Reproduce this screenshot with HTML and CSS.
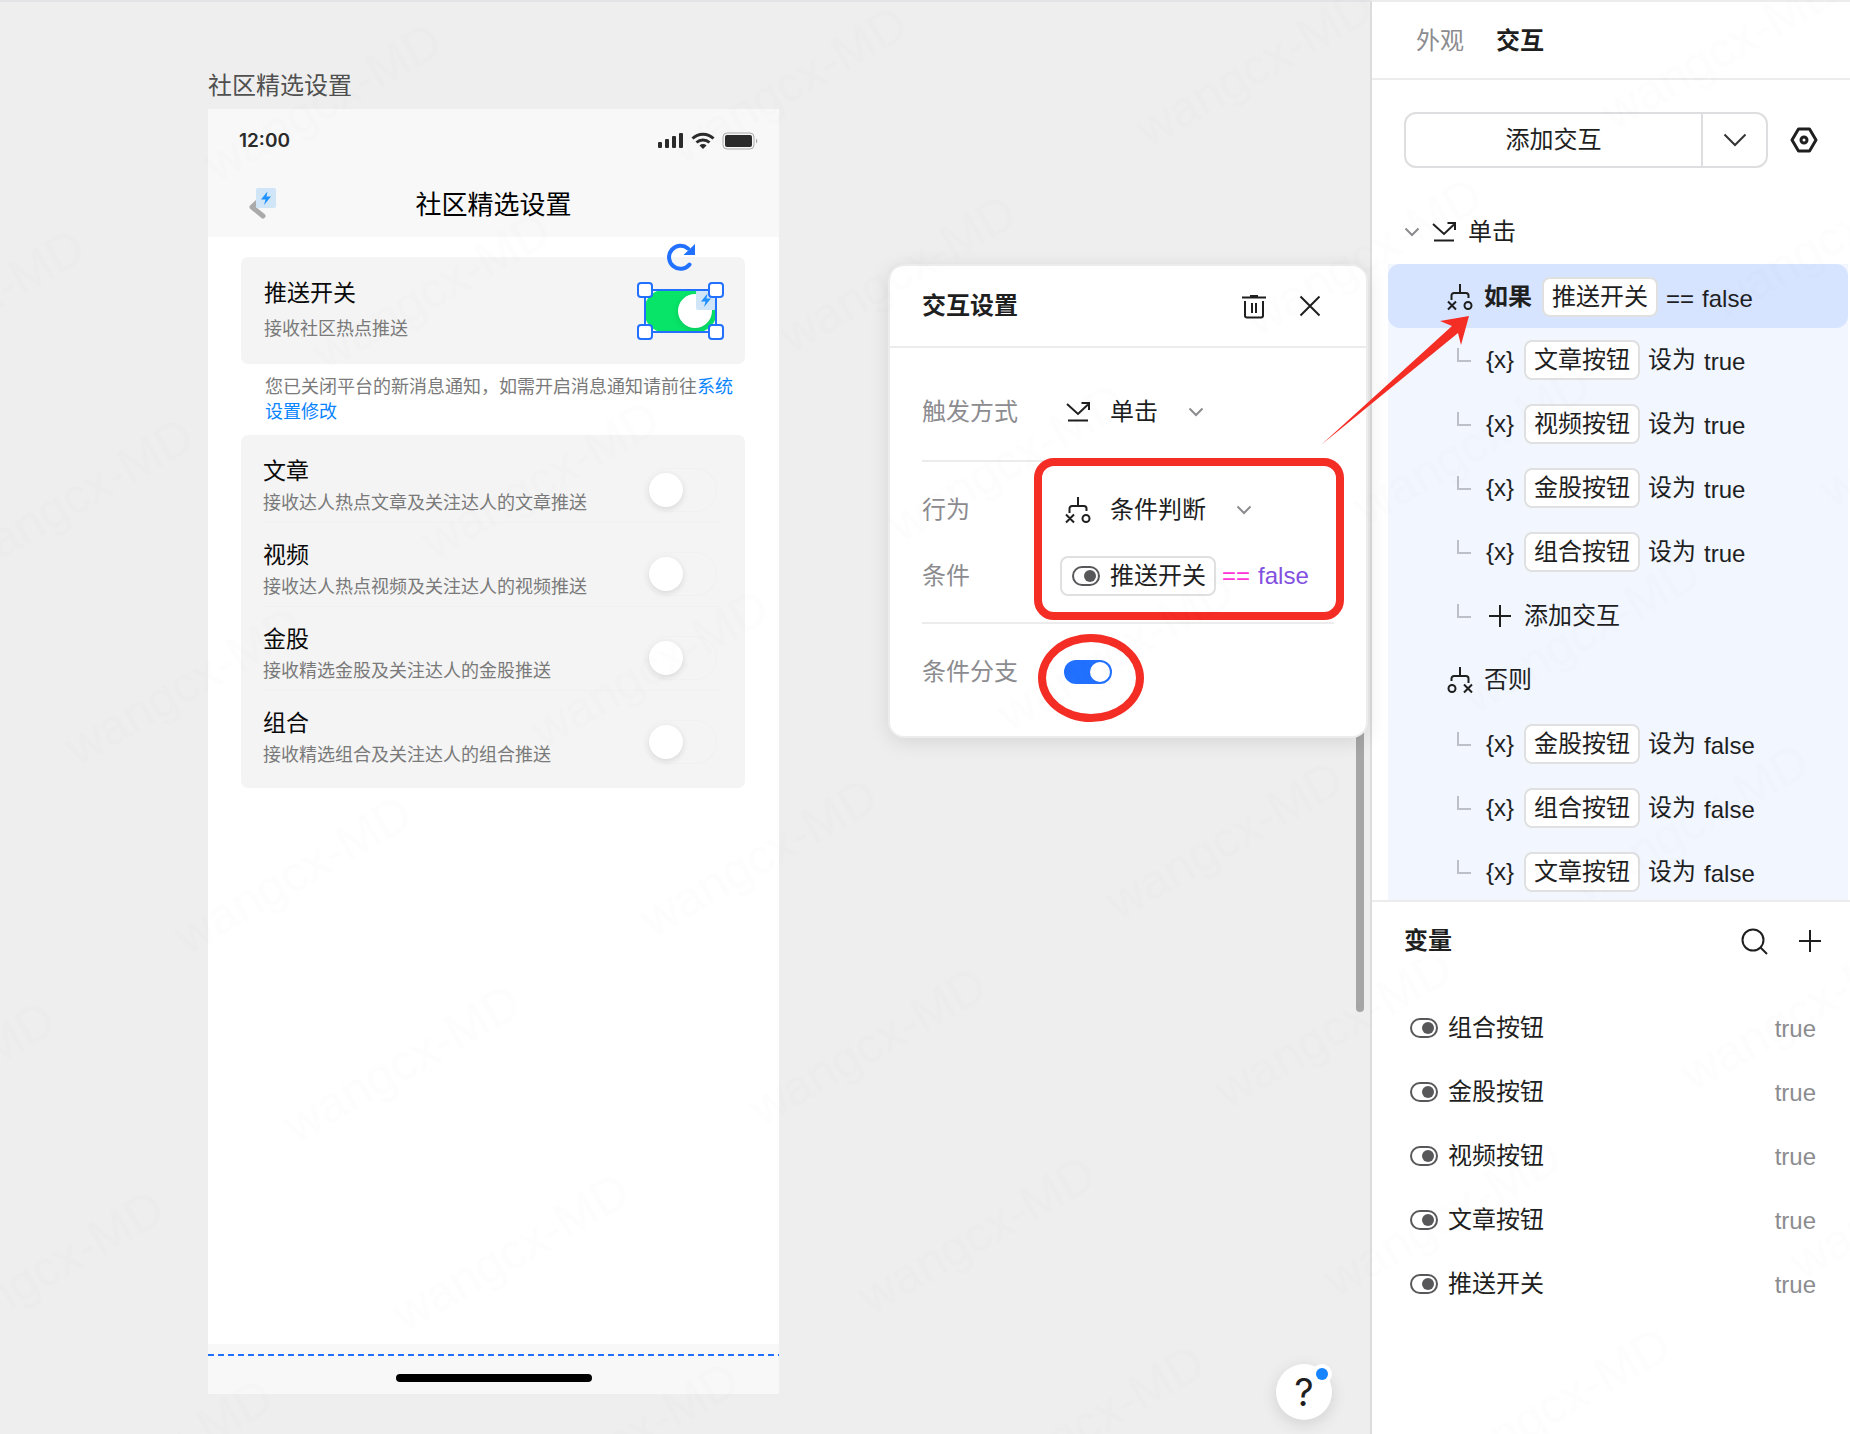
FILE: index.html
```html
<!DOCTYPE html>
<html lang="zh-CN">
<head>
    <meta charset="UTF-8">
    <meta name="viewport" content="width=device-width, initial-scale=1.0">
    <title>社区精选设置</title>
    <link rel="stylesheet" href="styles.css">
</head>
<body>
    <!-- Shared icons -->
    <svg class="icon-defs" aria-hidden="true">
        <symbol id="icon-click" viewBox="0 0 28 28">
            <path d="M3 6l11 10L24 6.500M17.500 5H25v7M4 22.500h20" fill="none" stroke="currentColor" stroke-width="2"/>
        </symbol>
        <symbol id="icon-if" viewBox="0 0 28 28">
            <path d="M14 1v9M5.500 17v-4.500a2.500 2.500 0 0 1 2.500-2.500h12a2.500 2.500 0 0 1 2.500 2.500V15M2 18.500l8 8M10 18.500l-8 8" fill="none" stroke="currentColor" stroke-width="2"/>
            <circle cx="22" cy="22.500" r="3.500" fill="none" stroke="currentColor" stroke-width="2"/>
        </symbol>
        <symbol id="icon-else" viewBox="0 0 28 28">
            <path d="M14 1v9M5.500 15v-2.500a2.500 2.500 0 0 1 2.500-2.500h12a2.500 2.500 0 0 1 2.500 2.500V17M18 18.500l8 8M26 18.500l-8 8" fill="none" stroke="currentColor" stroke-width="2"/>
            <circle cx="6" cy="22.500" r="3.500" fill="none" stroke="currentColor" stroke-width="2"/>
        </symbol>
        <symbol id="icon-chevron" viewBox="0 0 20 20">
            <path d="M3.500 6.500l6.500 6.500 6.500-6.500" fill="none" stroke="currentColor" stroke-width="2"/>
        </symbol>
        <symbol id="icon-bool" viewBox="0 0 28 20">
            <rect x="1" y="1" width="26" height="18" rx="9" fill="none" stroke="currentColor" stroke-width="2"/>
            <circle cx="18" cy="10" r="6" fill="currentColor"/>
        </symbol>
        <symbol id="icon-plus" viewBox="0 0 28 28">
            <path d="M14 3v22M3 14h22" fill="none" stroke="currentColor" stroke-width="2"/>
        </symbol>
        <symbol id="icon-branch" viewBox="0 0 14 14">
            <path d="M1 0v13h13" fill="none" stroke="currentColor" stroke-width="2"/>
        </symbol>
        <symbol id="icon-bolt" viewBox="0 0 20 20">
            <path d="M11.500 3.500L5 11.500h4.500L8 17l7-8.500h-4.500z" fill="#1e90ff"/>
        </symbol>
    </svg>

    <main class="canvas">
        <div class="artboard-name">社区精选设置</div>
        <div class="artboard">
            <header class="phone-header">
                <div class="status-bar">
                    <span class="status-time">12:00</span>
                    <svg class="status-icons" viewBox="0 0 100 18" aria-hidden="true">
                        <g fill="#2b2b2b">
                            <rect x="0" y="10" width="4" height="6" rx="1"/>
                            <rect x="7" y="7" width="4" height="9" rx="1"/>
                            <rect x="14" y="4" width="4" height="12" rx="1"/>
                            <rect x="21" y="1" width="4" height="15" rx="1"/>
                            <path d="M45 17l-3.500-3.500a5 5 0 0 1 7 0z"/>
                            <rect x="67" y="3" width="27" height="12" rx="2"/>
                        </g>
                        <path d="M34.500 6.500a15 15 0 0 1 21 0M38.500 10.500a9.500 9.500 0 0 1 13 0" fill="none" stroke="#2b2b2b" stroke-width="3"/>
                        <rect x="65" y="1" width="31" height="16" rx="4" fill="none" stroke="#aaa" stroke-width="1"/>
                        <path d="M98 6.500a3 3 0 0 1 0 5z" fill="#aaa"/>
                    </svg>
                </div>
                <div class="nav-bar">
                    <button class="back-btn" aria-label="返回">
                        <svg viewBox="0 0 20 24"><path d="M15 3L5 12l11 9" fill="none" stroke="#aaa" stroke-width="5" stroke-linecap="round" stroke-linejoin="round"/></svg>
                        <svg class="bolt-badge"><use href="#icon-bolt"/></svg>
                    </button>
                    <h1>社区精选设置</h1>
                </div>
            </header>

            <div class="phone-content">
                <div class="card push-card">
                    <label class="setting-text" for="push">
                        <span class="setting-title">推送开关</span>
                        <span class="setting-desc">接收社区热点推送</span>
                    </label>
                    <div class="selection">
                        <input type="checkbox" class="phone-switch" id="push" checked>
                        <svg class="bolt-badge"><use href="#icon-bolt"/></svg>
                        <svg class="rotate-handle" viewBox="0 0 28 28" aria-hidden="true">
                            <path d="M22.500 21.500A11.500 11.500 0 1 1 21 5.500" fill="none" stroke="#2170ff" stroke-width="4" stroke-linecap="round"/>
                            <path d="M28 1v11H16.500z" fill="#2170ff"/>
                        </svg>
                        <i class="handle top left"></i>
                        <i class="handle top right"></i>
                        <i class="handle bottom left"></i>
                        <i class="handle bottom right"></i>
                    </div>
                </div>

                <p class="notice">您已关闭平台的新消息通知，如需开启消息通知请前往<a href="#">系统设置修改</a></p>

                <div class="card list-card">
                    <div class="setting-row">
                        <label class="setting-text" for="article">
                            <span class="setting-title">文章</span>
                            <span class="setting-desc">接收达人热点文章及关注达人的文章推送</span>
                        </label>
                        <input type="checkbox" class="phone-switch" id="article">
                    </div>
                    <div class="setting-row">
                        <label class="setting-text" for="video">
                            <span class="setting-title">视频</span>
                            <span class="setting-desc">接收达人热点视频及关注达人的视频推送</span>
                        </label>
                        <input type="checkbox" class="phone-switch" id="video">
                    </div>
                    <div class="setting-row">
                        <label class="setting-text" for="stock">
                            <span class="setting-title">金股</span>
                            <span class="setting-desc">接收精选金股及关注达人的金股推送</span>
                        </label>
                        <input type="checkbox" class="phone-switch" id="stock">
                    </div>
                    <div class="setting-row">
                        <label class="setting-text" for="group">
                            <span class="setting-title">组合</span>
                            <span class="setting-desc">接收精选组合及关注达人的组合推送</span>
                        </label>
                        <input type="checkbox" class="phone-switch" id="group">
                    </div>
                </div>
            </div>

            <footer class="phone-footer">
                <svg class="fold-line" aria-hidden="true"><path d="M0 1h571" stroke="#2170ff" stroke-width="2" stroke-dasharray="6 4"/></svg>
                <div class="home-bar"></div>
            </footer>
        </div>

        <div class="scrollbar"></div>

        <section class="dialog">
            <div class="dialog-header">
                <h2>交互设置</h2>
                <button class="icon-btn" aria-label="删除">
                    <svg viewBox="0 0 28 28"><path d="M2 5.500h24M10 4h8M5 9v14.500a2 2 0 0 0 2 2h14a2 2 0 0 0 2-2V9M12 11v10M16 11v10" fill="none" stroke="#1f1f1f" stroke-width="2"/></svg>
                </button>
                <button class="icon-btn" aria-label="关闭">
                    <svg viewBox="0 0 28 28"><path d="M4.500 4.500l19 19M23.500 4.500l-19 19" fill="none" stroke="#1f1f1f" stroke-width="2"/></svg>
                </button>
            </div>
            <div class="dialog-body">
                <div class="field-group">
                    <div class="field">
                        <label for="trigger">触发方式</label>
                        <div class="select">
                            <svg class="icon"><use href="#icon-click"/></svg>
                            <select id="trigger"><option>单击</option></select>
                            <svg class="chevron"><use href="#icon-chevron"/></svg>
                        </div>
                    </div>
                </div>
                <div class="field-group">
                    <div class="field">
                        <label for="action">行为</label>
                        <div class="select">
                            <svg class="icon"><use href="#icon-if"/></svg>
                            <select id="action"><option>条件判断</option></select>
                            <svg class="chevron"><use href="#icon-chevron"/></svg>
                        </div>
                    </div>
                    <div class="field expression">
                        <span class="field-label">条件</span>
                        <button class="chip chip-icon"><svg class="bool"><use href="#icon-bool"/></svg>推送开关</button>
                        <span class="operator">==</span>
                        <span class="literal">false</span>
                    </div>
                </div>
                <div class="field-group">
                    <div class="field">
                        <label for="branch">条件分支</label>
                        <input type="checkbox" class="switch" id="branch" checked>
                    </div>
                </div>
            </div>

            <!-- Red annotations -->
            <div class="mark-box"></div>
            <div class="mark-circle"></div>
            <svg class="mark-arrow" viewBox="0 0 150 130" aria-hidden="true">
                <path d="M0 130L131 11l-12-5 29-5-8 29-3-12z" fill="#f42d25"/>
            </svg>
        </section>

        <button class="help-btn" aria-label="帮助">?</button>
    </main>

    <aside class="panel">
        <nav class="tabs">
            <a href="#">外观</a>
            <a href="#" class="active">交互</a>
        </nav>

        <section class="interactions">
            <div class="toolbar">
                <div class="split-btn">
                    <button class="split-main">添加交互</button>
                    <button class="split-more" aria-label="更多">
                        <svg viewBox="0 0 28 28"><path d="M3.500 8.500L14 19 24.500 8.500" fill="none" stroke="#333" stroke-width="2"/></svg>
                    </button>
                </div>
                <button class="icon-btn" aria-label="设置">
                    <svg viewBox="0 0 28 28"><path d="M8.500 3h11L26 14l-6.500 11h-11L2 14z" fill="none" stroke="#1f1f1f" stroke-width="3" stroke-linejoin="round"/><circle cx="14" cy="14" r="3" fill="none" stroke="#1f1f1f" stroke-width="3"/></svg>
                </button>
            </div>

            <div class="event">
                <svg class="chevron"><use href="#icon-chevron"/></svg>
                <svg class="icon"><use href="#icon-click"/></svg>
                <span>单击</span>
            </div>

            <ul class="actions">
                <li class="condition selected">
                    <svg class="icon"><use href="#icon-if"/></svg>
                    <strong>如果</strong>
                    <button class="chip">推送开关</button>
                    <span class="value">==</span>
                    <span class="value">false</span>
                </li>
                <li class="action"><svg class="branch"><use href="#icon-branch"/></svg><span class="var">{x}</span><button class="chip">文章按钮</button><span>设为</span><span class="value">true</span></li>
                <li class="action"><svg class="branch"><use href="#icon-branch"/></svg><span class="var">{x}</span><button class="chip">视频按钮</button><span>设为</span><span class="value">true</span></li>
                <li class="action"><svg class="branch"><use href="#icon-branch"/></svg><span class="var">{x}</span><button class="chip">金股按钮</button><span>设为</span><span class="value">true</span></li>
                <li class="action"><svg class="branch"><use href="#icon-branch"/></svg><span class="var">{x}</span><button class="chip">组合按钮</button><span>设为</span><span class="value">true</span></li>
                <li class="action"><svg class="branch"><use href="#icon-branch"/></svg><button class="add-btn"><svg class="icon"><use href="#icon-plus"/></svg>添加交互</button></li>
                <li class="condition">
                    <svg class="icon"><use href="#icon-else"/></svg>
                    <span>否则</span>
                </li>
                <li class="action"><svg class="branch"><use href="#icon-branch"/></svg><span class="var">{x}</span><button class="chip">金股按钮</button><span>设为</span><span class="value">false</span></li>
                <li class="action"><svg class="branch"><use href="#icon-branch"/></svg><span class="var">{x}</span><button class="chip">组合按钮</button><span>设为</span><span class="value">false</span></li>
                <li class="action"><svg class="branch"><use href="#icon-branch"/></svg><span class="var">{x}</span><button class="chip">文章按钮</button><span>设为</span><span class="value">false</span></li>
            </ul>
        </section>

        <section class="variables">
            <div class="variables-header">
                <h2>变量</h2>
                <button class="icon-btn" aria-label="搜索">
                    <svg viewBox="0 0 28 28"><circle cx="13" cy="13" r="10.500" fill="none" stroke="#1f1f1f" stroke-width="2"/><path d="M20.500 20.500l6.500 6.500" stroke="#1f1f1f" stroke-width="2"/></svg>
                </button>
                <button class="icon-btn" aria-label="添加变量"><svg><use href="#icon-plus"/></svg></button>
            </div>
            <ul class="variable-list">
                <li><svg class="bool"><use href="#icon-bool"/></svg><span>组合按钮</span><span class="current">true</span></li>
                <li><svg class="bool"><use href="#icon-bool"/></svg><span>金股按钮</span><span class="current">true</span></li>
                <li><svg class="bool"><use href="#icon-bool"/></svg><span>视频按钮</span><span class="current">true</span></li>
                <li><svg class="bool"><use href="#icon-bool"/></svg><span>文章按钮</span><span class="current">true</span></li>
                <li><svg class="bool"><use href="#icon-bool"/></svg><span>推送开关</span><span class="current">true</span></li>
            </ul>
        </section>
    </aside>

    <!-- Page watermark -->
    <svg class="watermark" aria-hidden="true">
        <pattern id="wm" width="412" height="218" patternUnits="userSpaceOnUse" patternTransform="translate(217 183) rotate(-30) translate(-20 -120)">
            <text x="20" y="120" font-size="50">wangcx-MD</text>
        </pattern>
        <rect width="100%" height="100%" fill="url(#wm)"/>
    </svg>
</body>
</html>
```
FILE: styles.css
```css
* {
    box-sizing: border-box;
}

body {
    margin: 0;
    min-height: 100vh;
    display: flex;
    background: #eee;
    font-family: "Liberation Sans", "Noto Sans CJK SC", sans-serif;
    font-size: 24px;
    line-height: 36px;
    color: #1f1f1f;
}

h1, h2, p, ul {
    margin: 0;
    padding: 0;
    list-style: none;
}

h2 {
    font-size: 24px;
    font-weight: 600;
}

a {
    color: inherit;
    text-decoration: none;
}

button, input, select {
    margin: 0;
    padding: 0;
    border: none;
    background: none;
    font: inherit;
    color: inherit;
    appearance: none;
}

button {
    cursor: pointer;
}

svg {
    display: block;
    flex: none;
}

.icon-defs {
    position: absolute;
    width: 0;
    height: 0;
}

.icon {
    width: 28px;
    height: 28px;
}

.chevron {
    width: 20px;
    height: 20px;
    color: #8c8c90;
}

.bool {
    width: 28px;
    height: 20px;
    color: #58585b;
}

.icon-btn {
    width: 28px;
    height: 28px;
}

.icon-btn svg {
    width: 28px;
    height: 28px;
}

.chip {
    height: 40px;
    padding: 0 8px;
    border: 2px solid #e0e0e0;
    border-radius: 8px;
    background: #fff;
    line-height: 36px;
}

/* Canvas */
.canvas {
    position: relative;
    flex: 1;
    min-width: 0;
    padding: 66px 0 40px 208px;
    border-top: 2px solid #e3e3e5;
}

.artboard-name {
    margin-bottom: 5px;
    color: #505050;
}

.artboard {
    display: flex;
    flex-direction: column;
    width: 571px;
    min-height: 1285px;
    background: #fff;
}

.phone-header {
    background: #f8f8f8;
}

.status-bar {
    display: flex;
    justify-content: space-between;
    align-items: center;
    height: 64px;
    padding: 0 21px 0 31px;
}

.status-time {
    font-family: Inter, sans-serif;
    font-size: 19px;
    font-weight: 600;
    color: #2b2b2b;
}

.status-icons {
    width: 100px;
    height: 18px;
}

.nav-bar {
    display: grid;
    grid-template-columns: 1fr auto 1fr;
    align-items: center;
    height: 64px;
    padding: 0 39px;
}

.nav-bar h1 {
    font-size: 26px;
    font-weight: 400;
    color: #000;
}

.back-btn {
    position: relative;
    width: 20px;
    height: 24px;
}

.back-btn > svg:first-child {
    width: 20px;
    height: 24px;
    margin-top: 2px;
}

.bolt-badge {
    position: absolute;
    width: 20px;
    height: 20px;
    border-radius: 2px;
    background: #d0e6f8;
}

.back-btn .bolt-badge {
    left: 9px;
    top: -5px;
}

.phone-content {
    flex: 1;
    padding: 20px 34px 0 33px;
}

.card {
    border-radius: 7px;
    background: #f4f4f4;
}

.push-card {
    display: flex;
    justify-content: space-between;
    align-items: center;
    height: 107px;
    padding: 0 28px 0 23px;
}

.list-card {
    padding: 4px 22px 13px;
}

.setting-row {
    display: flex;
    justify-content: space-between;
    align-items: center;
    height: 84px;
    padding: 18px 6px 0 0;
    border-bottom: 1px solid #f1f1f1;
}

.setting-row:last-child {
    border-bottom: none;
}

.setting-text {
    display: flex;
    flex-direction: column;
    gap: 4px;
}

.push-card .setting-text {
    gap: 8px;
}

.setting-row .setting-text {
    align-self: flex-start;
}

.setting-title {
    font-size: 23px;
    line-height: 28px;
    color: #0a0a0a;
}

.setting-desc {
    font-size: 18px;
    line-height: 28px;
    color: #7a7a7a;
}

.phone-switch {
    display: block;
    width: 73px;
    height: 44px;
    padding: 4px;
    border: 1px solid #f1f1f1;
    border-radius: 22px;
    background: #f4f4f4;
}

.phone-switch::before {
    content: "";
    display: block;
    width: 34px;
    height: 34px;
    border-radius: 50%;
    background: #fff;
    box-shadow: 0 2px 6px rgba(0, 0, 0, 0.12);
}

.phone-switch:checked {
    border: none;
    background: #08e468;
}

.phone-switch:checked::before {
    margin-left: 30px;
    margin-top: 1px;
}

.notice {
    margin: 11px 0 10px;
    padding: 0 10px 0 24px;
    font-size: 18px;
    line-height: 25px;
    color: #7a7a7a;
}

.notice a {
    color: #0a84ff;
}

/* Selected element frame */
.selection {
    position: relative;
}

.selection::after {
    content: "";
    position: absolute;
    inset: 0;
    border: 2px solid #2170ff;
}

.selection .bolt-badge {
    right: 1px;
    top: 1px;
}

.rotate-handle {
    position: absolute;
    left: 23px;
    bottom: 62px;
    width: 28px;
    height: 28px;
}

.handle {
    position: absolute;
    z-index: 1;
    width: 16px;
    height: 16px;
    border: 2px solid #2170ff;
    border-radius: 4px;
    background: #fff;
}

.handle.top {
    top: -7px;
}

.handle.bottom {
    bottom: -7px;
}

.handle.left {
    left: -7px;
}

.handle.right {
    right: -7px;
}

.phone-footer {
    height: 50px;
    padding-top: 10px;
    background: #f8f8f8;
}

.fold-line {
    width: 100%;
    height: 2px;
}

.home-bar {
    width: 196px;
    height: 8px;
    margin: 18px auto 0;
    border-radius: 4px;
    background: #000;
}

.scrollbar {
    position: absolute;
    right: 6px;
    top: 400px;
    width: 8px;
    height: 610px;
    border-radius: 4px;
    background: #a6a6a6;
}

/* Interaction dialog */
.dialog {
    position: absolute;
    z-index: 2;
    top: 262px;
    right: 2px;
    width: 480px;
    border: 2px solid #ececec;
    border-radius: 16px;
    background: #fff;
    box-shadow: 0 4px 20px rgba(0, 0, 0, 0.1);
}

.dialog-header {
    display: flex;
    align-items: center;
    gap: 28px;
    height: 82px;
    padding: 0 42px 0 32px;
    border-bottom: 2px solid #ececec;
}

.dialog-header h2 {
    flex: 1;
}

.dialog-body {
    padding: 16px 32px;
}

.field-group {
    padding: 16px 0;
    border-bottom: 2px solid #ececec;
}

.field-group:last-child {
    border-bottom: none;
}

.field {
    display: flex;
    align-items: center;
    height: 64px;
}

.expression {
    padding-top: 4px;
}

.field-label,
.field label {
    width: 138px;
    color: #8c8c90;
}

.select {
    display: flex;
    align-items: center;
    margin-left: 4px;
}

.select select {
    margin-left: 18px;
    padding-right: 48px;
}

.select .chevron {
    margin-left: -20px;
    pointer-events: none;
}

.chip-icon {
    display: flex;
    align-items: center;
    gap: 10px;
    padding-left: 10px;
}

.operator {
    margin-left: 6px;
    color: #ff35d7;
}

.literal {
    margin-left: 8px;
    color: #8250df;
}

.switch {
    width: 48px;
    height: 24px;
    margin-left: 4px;
    padding: 2px;
    border-radius: 12px;
    background: #2170ff;
}

.switch::before {
    content: "";
    display: block;
    width: 20px;
    height: 20px;
    border-radius: 50%;
    background: #fff;
}

.switch:checked::before {
    margin-left: auto;
}

.mark-box {
    position: absolute;
    left: 144px;
    top: 192px;
    width: 310px;
    height: 162px;
    border: 8px solid #f42d25;
    border-radius: 20px;
    pointer-events: none;
}

.mark-circle {
    position: absolute;
    left: 148px;
    top: 368px;
    width: 106px;
    height: 88px;
    border: 8px solid #f42d25;
    border-radius: 50%;
    pointer-events: none;
}

.mark-arrow {
    position: absolute;
    left: 431px;
    top: 49px;
    width: 150px;
    height: 130px;
    pointer-events: none;
}

.help-btn {
    position: absolute;
    right: 38px;
    bottom: 14px;
    width: 56px;
    height: 56px;
    border-radius: 50%;
    background: #fff;
    box-shadow: 0 4px 16px rgba(0, 0, 0, 0.12);
    font-family: Inter, sans-serif;
    font-size: 38px;
}

.help-btn::after {
    content: "";
    position: absolute;
    top: 4px;
    right: 4px;
    width: 12px;
    height: 12px;
    border-radius: 50%;
    background: #1684ff;
    box-shadow: 0 0 0 4px #fff;
}

/* Right panel */
.panel {
    display: flex;
    flex-direction: column;
    flex: none;
    width: 480px;
    height: 100vh;
    border-left: 2px solid #dcdcde;
    border-top: 2px solid #ececec;
    background: #fff;
}

.tabs {
    display: flex;
    align-items: center;
    gap: 32px;
    height: 78px;
    padding: 2px 0 0 44px;
    border-bottom: 2px solid #ececec;
    color: #8c8c90;
}

.tabs .active {
    font-weight: 600;
    color: #1f1f1f;
}

.interactions {
    flex: 1;
    min-height: 0;
    overflow: hidden;
}

.toolbar {
    display: flex;
    align-items: center;
    gap: 22px;
    padding: 32px 32px 32px;
}

.split-btn {
    flex: 1;
    display: flex;
    height: 56px;
    border: 2px solid #dedee0;
    border-radius: 12px;
}

.split-main {
    flex: 1;
}

.split-more {
    display: flex;
    justify-content: center;
    align-items: center;
    width: 65px;
    border-left: 2px solid #dedee0;
}

.split-more svg {
    width: 28px;
    height: 28px;
}

.event {
    display: flex;
    align-items: center;
    height: 64px;
    padding-left: 30px;
}

.event .icon {
    margin: 0 10px 0 8px;
}

.actions {
    margin: 0 2px 0 16px;
    background: #f1f6ff;
}

.actions li {
    display: flex;
    align-items: center;
    height: 64px;
}

.condition {
    gap: 10px;
    padding-left: 58px;
}

.condition strong {
    font-weight: 600;
}

.condition.selected {
    padding-top: 2px;
    border-radius: 12px;
    background: #d7e4ff;
}

.selected .value {
    margin-left: -2px;
}

.action {
    padding-left: 69px;
}

.branch {
    width: 14px;
    height: 14px;
    margin: 0 15px 10px 0;
    color: #bcbfc6;
}

.var {
    margin-right: 10px;
}

.action .chip {
    margin-right: 8px;
}

.value {
    padding-top: 4px;
}

.action .value {
    margin-left: 8px;
}

.add-btn {
    display: flex;
    align-items: center;
    gap: 10px;
}

/* Variables */
.variables {
    min-height: 534px;
    border-top: 2px solid #ececec;
    padding: 0 32px;
}

.variables-header {
    display: flex;
    align-items: center;
    gap: 28px;
    height: 78px;
    margin-right: -6px;
}

.variables-header h2 {
    flex: 1;
}

.variable-list {
    padding: 16px 2px 0 6px;
}

.variable-list li {
    display: flex;
    align-items: center;
    gap: 10px;
    height: 64px;
}

.current {
    margin-left: auto;
    padding-top: 2px;
    color: #8c8c90;
}

.watermark {
    position: fixed;
    z-index: 3;
    inset: 0;
    width: 100%;
    height: 100%;
    fill: rgba(0, 0, 0, 0.008);
    pointer-events: none;
}
```
